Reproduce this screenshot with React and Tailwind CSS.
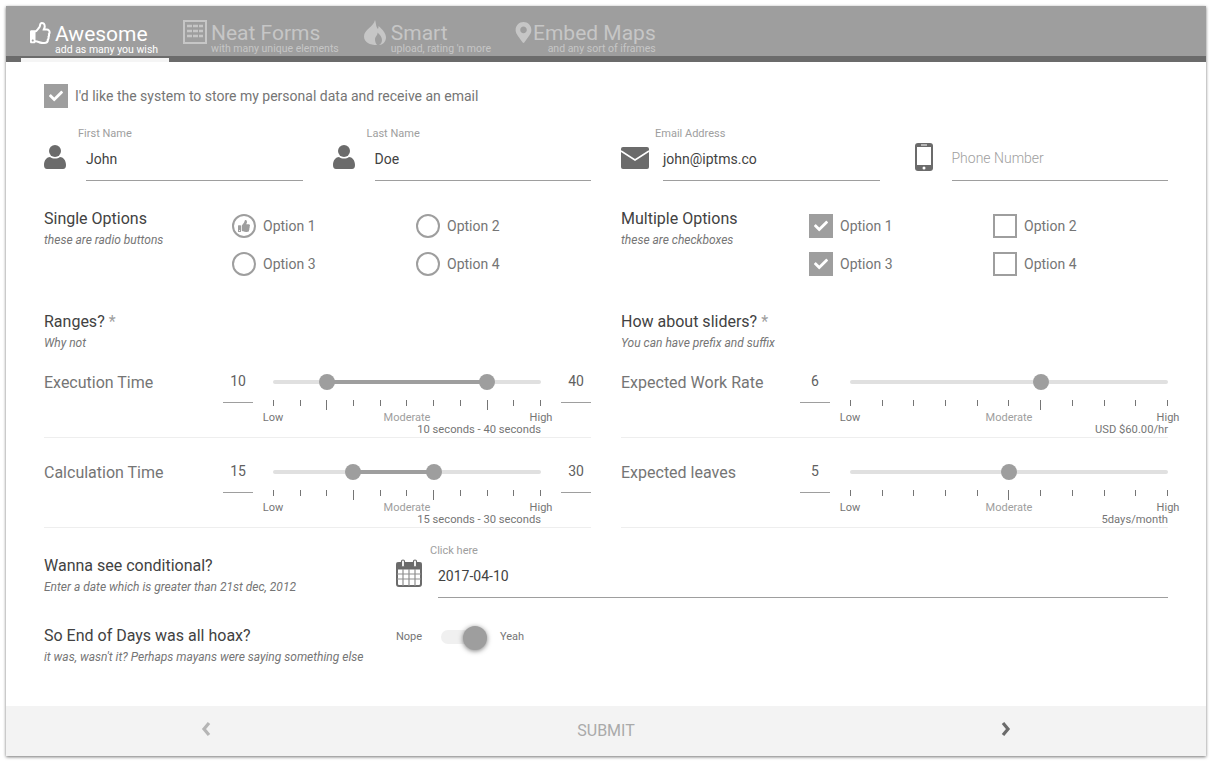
import { FaCheck, FaMapMarkerAlt, FaRegThumbsUp, FaThumbsUp } from "react-icons/fa";

const ranges = [
  { label: "Execution Time", from: 10, to: 40, low: 20, high: 80, note: "10 seconds - 40 seconds" },
  { label: "Calculation Time", from: 15, to: 30, low: 30, high: 60, note: "15 seconds - 30 seconds" },
];

const sliders = [
  { label: "Expected Work Rate", value: 6, at: 60, note: "USD $60.00/hr" },
  { label: "Expected leaves", value: 5, at: 50, note: "5days/month" },
];

function UserIcon() {
  return (
    <svg viewBox="0 0 22 24" className="mt-[1px] h-[24px] w-[22px] fill-[#6b6b6b]">
      <circle cx="11" cy="6" r="6" />
      <path d="M0 20c0-5 3-8 6-8 1.500 1 3 1.500 5 1.500s3.500-.5 5-1.500c3 0 6 3 6 8 0 2.500-1 4-3 4H3c-2 0-3-1.500-3-4z" />
    </svg>
  );
}

function MailIcon() {
  return (
    <svg viewBox="0 0 28 22" className="mt-[3px] h-[22px] w-[28px]">
      <rect width="28" height="22" rx="2" fill="#6b6b6b" />
      <path d="M0 4l14 9 14-9" fill="none" stroke="#fff" strokeWidth="1.500" />
    </svg>
  );
}

function PhoneIcon() {
  return (
    <svg viewBox="0 0 18 28" className="-mt-[1px] ml-[5px] h-[28px] w-[18px]">
      <rect width="18" height="28" rx="3" fill="#6b6b6b" />
      <rect x="2" y="4" width="14" height="18" fill="#fff" />
      <circle cx="9" cy="25" r="1.500" fill="#fff" />
      <rect x="6" y="1.500" width="6" height="1" fill="#fff" />
    </svg>
  );
}

function FormsIcon() {
  return (
    <svg viewBox="0 0 24 24" className="-mt-[1px] h-[24px] w-[24px]" fill="none" stroke="#c6c6c6">
      <rect x="1" y="1" width="22" height="22" strokeWidth="2" />
      <path d="M4 6h16M4 11h16M4 16h16" strokeWidth="2.500" strokeDasharray="5 1" />
    </svg>
  );
}

function FlameIcon() {
  return (
    <svg viewBox="0 0 22 25" className="-mt-[1px] h-[25px] w-[22px]">
      <path
        fillRule="evenodd"
        fill="#c6c6c6"
        d="M11 0c1.500 4 .5 6.500 3 9 .5-1 .5-2 .5-3 4 3.500 7.500 7.500 7.500 11.500 0 4.500-3.500 7.500-7 7.500 2-1 3-3 3-5 0-3-2-5-4.500-7.500 .3 3-2.500 4-2.500 7 0 2 .8 4 2 5.500C6 25 0 22.500 0 16.500 0 9.500 9.500 7 11 0z"
      />
    </svg>
  );
}

function CalendarIcon() {
  return (
    <svg viewBox="0 0 26 28" className="mt-[1px] h-[28px] w-[26px]" fill="none" stroke="#6b6b6b">
      <rect x="1" y="4" width="24" height="23" rx="2" strokeWidth="2" />
      <rect x="1" y="4" width="24" height="6" fill="#6b6b6b" />
      <path d="M1 15h24M1 20h24M7 10v17M13 10v17M19 10v17" stroke="#8f8f8f" strokeWidth="1.200" />
      <rect x="5.500" y="1" width="3" height="7" rx="1.500" fill="#fff" strokeWidth="1.200" />
      <rect x="17.500" y="1" width="3" height="7" rx="1.500" fill="#fff" strokeWidth="1.200" />
    </svg>
  );
}

function Chevron({ points, color, className }) {
  return (
    <svg viewBox="0 0 10 16" className={`absolute top-[15px] h-[16px] w-[10px] ${className}`} fill="none" stroke={color} strokeWidth="3.200">
      <polyline points={points} />
    </svg>
  );
}

function Tab({ icon, title, sub, active, end, gap, className }) {
  return (
    <div className={`flex h-[56px] items-start ${className}`}>
      <div className="mt-[15px] shrink-0">{icon}</div>
      <div className={`flex flex-col ${gap} ${end ? "items-end" : "items-start"}`}>
        <span className={`text-[21px] leading-[22px] ${active ? "mt-[17px] text-white" : "mt-[16px] text-[#c6c6c6]"}`}>{title}</span>
        <span className={`text-[10.5px] leading-[10px] whitespace-nowrap ${active ? "text-white" : "text-[#c6c6c6]"}`}>{sub}</span>
      </div>
    </div>
  );
}

function TextField({ icon, label, value, placeholder }) {
  return (
    <div className="flex">
      <div className="flex w-[42px] shrink-0 items-start pt-[17px]">{icon}</div>
      <div className="flex-1">
        <div className="-ml-[8px] h-[14px] text-[11px] leading-[14px] text-[#9e9e9e]">{label}</div>
        <div className={`mt-[4px] flex h-[36px] items-start border-b border-[#9e9e9e] text-[14px] leading-[20px] ${value ? "pt-[4px] text-[#424242]" : "pt-[3px] font-light text-[#9e9e9e]"}`}>
          {value || placeholder}
        </div>
      </div>
    </div>
  );
}

function Heading({ title, sub, star }) {
  return (
    <div>
      <div className="text-[16px] leading-[20px] text-[#424242]">
        {title}
        {star ? <span className="text-[#9e9e9e]"> *</span> : null}
      </div>
      <div className="mt-[4px] text-[12px] leading-[14px] italic text-[#757575]">{sub}</div>
    </div>
  );
}

function Choice({ label, mark }) {
  return (
    <div className="flex h-[24px] items-center gap-[7px] text-[14px] text-[#757575]">
      {mark}
      {label}
    </div>
  );
}

function Radio({ on }) {
  return (
    <span className="flex h-[24px] w-[24px] items-center justify-center rounded-full border-2 border-[#9e9e9e]">
      {on ? <FaThumbsUp className="text-[12px] text-[#9e9e9e]" /> : null}
    </span>
  );
}

function Check({ on }) {
  return on ? (
    <span className="flex h-[24px] w-[24px] items-center justify-center bg-[#9e9e9e]">
      <FaCheck className="text-[14px] text-white" />
    </span>
  ) : (
    <span className="h-[24px] w-[24px] border-2 border-[#9e9e9e]" />
  );
}

function OptionGroup({ title, sub, mark }) {
  return (
    <div className="flex">
      <div className="w-[188px] pt-[4px]">
        <Heading title={title} sub={sub} />
      </div>
      <div className="grid flex-1 grid-cols-[184px_1fr] gap-y-[14px] pt-[9px]">
        {[1, 2, 3, 4].map((n) => (
          <Choice key={n} label={`Option ${n}`} mark={mark(n)} />
        ))}
      </div>
    </div>
  );
}

function Track({ marks, band }) {
  return (
    <div className="flex-1">
      <div className="relative mt-[9px] h-[4px] rounded-full bg-[#e0e0e0]">
        {band ? (
          <div className="absolute top-0 h-[4px] bg-[#9e9e9e]" style={{ left: `${band[0]}%`, width: `${band[1] - band[0]}%` }} />
        ) : null}
        {marks.map((m) => (
          <div key={m} className="absolute -top-[6px] -ml-[8px] h-[16px] w-[16px] rounded-full bg-[#9e9e9e]" style={{ left: `${m}%` }} />
        ))}
      </div>
      <div className="mt-[16px] flex h-[10px] items-start justify-between">
        {[0, 10, 20, 30, 40, 50, 60, 70, 80, 90, 100].map((t) => (
          <span key={t} className={`w-px bg-[#757575] ${marks.includes(t) ? "h-[10px]" : "h-[6px]"}`} />
        ))}
      </div>
      <div className="relative mt-[2px] h-[12px] text-[11px] leading-[12px]">
        <span className="absolute top-0 left-0 -translate-x-1/2 text-[#757575]">Low</span>
        <span className="absolute top-0 left-1/2 -translate-x-1/2 text-[#9e9e9e]">Moderate</span>
        <span className="absolute top-0 left-full -translate-x-1/2 text-[#757575]">High</span>
      </div>
    </div>
  );
}

function ValueBox({ value, className }) {
  return (
    <div className={`h-[32px] w-[30px] shrink-0 border-b border-[#9e9e9e] text-center text-[14px] leading-[20px] text-[#616161] ${className}`}>
      {value}
    </div>
  );
}

function SliderRow({ label, left, right, marks, band, note }) {
  return (
    <div className="relative h-[68px] border-b border-[#eeeeee] pt-[1px]">
      <div className="flex">
        <div className="w-[179px] shrink-0 pt-[2px] text-[16px] leading-[20px] text-[#757575]">{label}</div>
        <ValueBox value={left} className="mr-[20px]" />
        <Track marks={marks} band={band} />
        {right !== undefined ? <ValueBox value={right} className="ml-[20px]" /> : null}
      </div>
      <div className={`absolute bottom-[1px] text-[11.2px] leading-[12px] text-[#757575] ${right !== undefined ? "right-[50px]" : "right-0"}`}>{note}</div>
    </div>
  );
}

export default function App() {
  return (
    <div className="h-[763px] bg-white pt-[6px] pl-[6px] font-['Roboto',sans-serif]">
      <div className="flex h-[750px] w-[1200px] flex-col bg-white shadow-[0_1px_3px_rgba(0,0,0,0.55)]">
        <div className="flex h-[56px] shrink-0 border-b-[6px] border-[#6b6b6b] bg-[#9e9e9e]">
          <div className="ml-[15px] h-[56px] w-[148px] border-b-[4px] border-[#f5f5f5] pl-[9px]">
            <Tab active icon={<FaRegThumbsUp className="mt-[1px] text-[22px] text-white" />} title="Awesome" sub="add as many you wish" gap="ml-[3px]" className="" />
          </div>
          <Tab icon={<FormsIcon />} title="Neat Forms" sub="with many unique elements" gap="ml-[4px]" className="ml-[14px]" />
          <Tab icon={<FlameIcon />} title="Smart" sub="upload, rating 'n more" gap="ml-[5px]" className="ml-[25px]" />
          <Tab icon={<FaMapMarkerAlt className="mt-[1px] text-[21px] text-[#c6c6c6]" />} title="Embed Maps" sub="and any sort of iframes" end gap="-ml-[1px]" className="ml-[22px]" />
        </div>

        <div className="px-[38px]">
          <div className="mt-[22px] flex h-[24px] items-center gap-[7px] text-[14px] text-[#757575]">
            <Check on />
            I'd like the system to store my personal data and receive an email
          </div>

          <div className="mt-[19px] grid grid-cols-4 gap-x-[30px]">
            <TextField icon={<UserIcon />} label="First Name" value="John" />
            <TextField icon={<UserIcon />} label="Last Name" value="Doe" />
            <TextField icon={<MailIcon />} label="Email Address" value="john@iptms.co" />
            <TextField icon={<PhoneIcon />} label="" placeholder="Phone Number" />
          </div>

          <div className="mt-[24px] grid grid-cols-2 gap-x-[30px]">
            <OptionGroup title="Single Options" sub="these are radio buttons" mark={(n) => <Radio on={n === 1} />} />
            <OptionGroup title="Multiple Options" sub="these are checkboxes" mark={(n) => <Check on={n % 2 === 1} />} />
          </div>

          <div className="mt-[36px] grid grid-cols-2 gap-x-[30px]">
            <div>
              <Heading title="Ranges?" sub="Why not" star />
              <div className="mt-[20px] flex flex-col gap-[22px]">
                {ranges.map((r) => (
                  <SliderRow key={r.label} label={r.label} left={r.from} right={r.to} marks={[r.low, r.high]} band={[r.low, r.high]} note={r.note} />
                ))}
              </div>
            </div>
            <div>
              <Heading title="How about sliders?" sub="You can have prefix and suffix" star />
              <div className="mt-[20px] flex flex-col gap-[22px]">
                {sliders.map((s) => (
                  <SliderRow key={s.label} label={s.label} left={s.value} marks={[s.at]} note={s.note} />
                ))}
              </div>
            </div>
          </div>

          <div className="mt-[16px] flex">
            <div className="w-[352px] shrink-0 pt-[12px]">
              <Heading title="Wanna see conditional?" sub="Enter a date which is greater than 21st dec, 2012" />
            </div>
            <div className="flex-1">
              <div className="ml-[34px] h-[14px] text-[11px] leading-[14px] text-[#9e9e9e]">Click here</div>
              <div className="flex">
                <div className="w-[42px] shrink-0">
                  <CalendarIcon />
                </div>
                <div className="h-[40px] flex-1 border-b border-[#9e9e9e] pt-[8px] text-[14px] leading-[20px] text-[#424242]">2017-04-10</div>
              </div>
            </div>
          </div>

          <div className="mt-[28px] flex">
            <div className="w-[352px] shrink-0">
              <Heading title="So End of Days was all hoax?" sub="it was, wasn't it? Perhaps mayans were saying something else" />
            </div>
            <div className="flex h-[22px] items-center text-[11px] text-[#757575]">
              <span className="w-[45px]">Nope</span>
              <span className="relative h-[14px] w-[46px] rounded-full bg-[#f0f0f0]">
                <span className="absolute top-[-4px] left-[22px] h-[24px] w-[24px] rounded-full bg-[#9e9e9e] shadow-[0_1px_5px_rgba(0,0,0,0.5)]" />
              </span>
              <span className="ml-[13px]">Yeah</span>
            </div>
          </div>
        </div>

        <div className="relative mt-auto flex h-[50px] shrink-0 items-center justify-center bg-[#f3f3f3] text-[16px] text-[#aaaaaa]">
          SUBMIT
          <Chevron points="8,2 3,8 8,14" color="#b5b5b5" className="left-[195px]" />
          <Chevron points="2,2 7,8 2,14" color="#6b6b6b" className="left-[995px]" />
        </div>
      </div>
    </div>
  );
}
